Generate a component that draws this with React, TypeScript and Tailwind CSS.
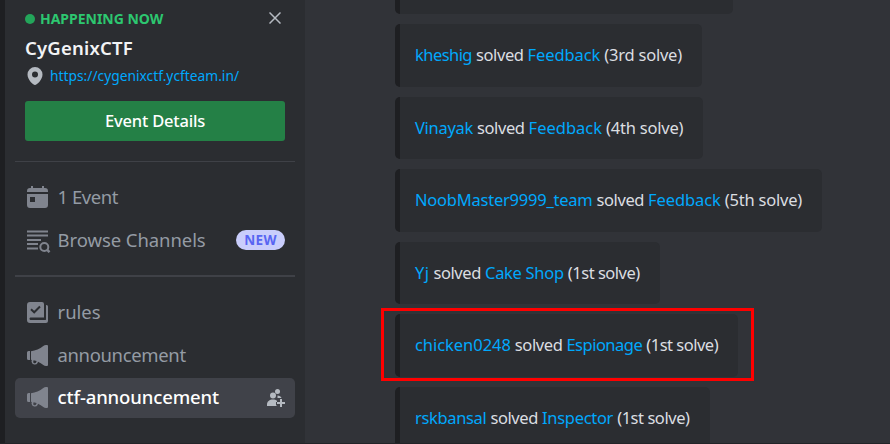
import type { ReactNode } from "react";

type Solve = {
  user: string;
  challenge: string;
  place: string;
  box: string;
  userTrack: string;
  challengeTrack: string;
  placeTrack: string;
};

const solves: Solve[] = [
  { user: "kheshig", challenge: "Feedback", place: "(3rd solve)", box: "w-[307px] h-[63px]", userTrack: "tracking-[-0.55px]", challengeTrack: "tracking-[-0.1px]", placeTrack: "tracking-[-0.22px]" },
  { user: "Vinayak", challenge: "Feedback", place: "(4th solve)", box: "w-[308px] h-[62px]", userTrack: "tracking-[-0.3px]", challengeTrack: "tracking-normal", placeTrack: "tracking-[-0.22px]" },
  { user: "NoobMaster9999_team", challenge: "Feedback", place: "(5th solve)", box: "w-[427px] h-[63px]", userTrack: "tracking-[-0.23px]", challengeTrack: "tracking-[-0.1px]", placeTrack: "tracking-[-0.22px]" },
  { user: "Yj", challenge: "Cake Shop", place: "(1st solve)", box: "w-[265px] h-[62px]", userTrack: "tracking-[0.4px]", challengeTrack: "tracking-[-0.3px]", placeTrack: "tracking-[-0.48px]" },
  { user: "chicken0248", challenge: "Espionage", place: "(1st solve)", box: "w-[343px] h-[63px]", userTrack: "tracking-[-0.05px]", challengeTrack: "tracking-[-0.5px]", placeTrack: "tracking-[-0.5px]" },
  { user: "rskbansal", challenge: "Inspector", place: "(1st solve)", box: "w-[315px] h-[63px]", userTrack: "tracking-[-0.35px]", challengeTrack: "tracking-[-0.3px]", placeTrack: "tracking-[-0.45px]" },
];

function SolveCard({ user, challenge, place, box, userTrack, challengeTrack, placeTrack }: Solve) {
  return (
    <div className={`flex shrink-0 items-center gap-1 rounded-[5px] border-l-[5px] border-[#1e1f22] bg-[#2b2d31] pl-[15px] text-[16.5px] whitespace-nowrap text-[#dbdee1] ${box}`}>
      <span className={`text-[#00a8fc] ${userTrack}`}>{user}</span>
      <span className="tracking-[-0.4px]">solved</span>
      <span className={`text-[#00a8fc] ${challengeTrack}`}>{challenge}</span>
      <span className={placeTrack}>{place}</span>
    </div>
  );
}

function CalendarIcon() {
  return (
    <svg width="21" height="22" viewBox="0 0 21 22" fill="#80848e">
      <path d="M4 0h2v2h9V0h2v2h1a3 3 0 0 1 3 3v1H0V5a3 3 0 0 1 3-3h1z" />
      <path fillRule="evenodd" d="M0 8h21v11a3 3 0 0 1-3 3H3a3 3 0 0 1-3-3zM3 11v5h5v-5z" />
    </svg>
  );
}

function BrowseIcon() {
  return (
    <svg className="relative top-px" width="24" height="23" viewBox="0 0 24 23" fill="none" stroke="#80848e" strokeWidth="2">
      <path d="M0 1.500h21M0 5.500h21M0 10h14M0 14h11M0 18.500h11" />
      <circle cx="17.300" cy="17" r="4" />
      <path d="m20 19.700 2.500 2.500" strokeWidth="2.500" />
    </svg>
  );
}

function RulesIcon() {
  return (
    <svg width="21" height="21" viewBox="0 0 21 21" fill="#80848e">
      <path d="M3 0h12a2 2 0 0 1 2 2v13.500H4c-.8 0-1.500.4-1.500 1.200 0 .9.700 1.300 1.500 1.300h14.500c.3 0 .5-.2.500-.5V3h.500A1.500 1.500 0 0 1 21 4.500V19a2 2 0 0 1-2 2H3a3 3 0 0 1-3-3V3a3 3 0 0 1 3-3" />
      <path d="m4 7.300 3.200 3L13 4.500" fill="none" stroke="#2b2d31" strokeWidth="2" />
    </svg>
  );
}

function MegaphoneIcon() {
  return (
    <svg width="21" height="21" viewBox="0 0 21 21" fill="#80848e">
      <path d="M3 6v9H1.500A1.500 1.500 0 0 1 0 13.500v-6A1.500 1.500 0 0 1 1.500 6z" />
      <path fillRule="evenodd" d="M4 6.200c4.500-.5 8.800-2.300 12.300-5.200.8-.7 1.700-1 2.700-1h1a1 1 0 0 1 1 1v19a1 1 0 0 1-1 1h-1c-1 0-1.900-.3-2.700-1a20 20 0 0 0-5.300-3.200l-.4 1.100A3.300 3.300 0 0 1 4.500 16.500l.3-1.600L4 14.800zM6.600 15.200l-.3 1.300c-.2.900.3 1.600 1.100 1.800.8.200 1.500-.2 1.800-1l.4-1.200z" />
    </svg>
  );
}

function InviteIcon() {
  return (
    <svg width="18" height="19" viewBox="0 0 18 19" fill="#b5bac1">
      <circle cx="10.500" cy="2.500" r="2.500" />
      <circle cx="6" cy="6.500" r="3" />
      <path d="M10.500 6.500c2 0 3.500 1 4 2.500h-4z" />
      <path d="M0 17v-1.500C0 12.500 2.500 10.500 6 10.500c1.500 0 3 .4 4 1.200V13H9v3.500h1V17z" />
      <path d="M13 10h2v3h3v2h-3v3h-2v-3h-3v-2h3z" />
    </svg>
  );
}

function NavRow({ icon, label, children }: { icon: ReactNode; label: ReactNode; children?: ReactNode }) {
  return (
    <div className="flex h-10 items-center rounded px-3">
      <span className="flex w-[30.500px] shrink-0">{icon}</span>
      {label}
      {children}
    </div>
  );
}

export default function App() {
  return (
    <div className="flex h-[444px] w-[890px] overflow-hidden border-b border-[#232428] bg-[#313338] font-['Noto_Sans',sans-serif]">
      <div className="w-[5px] shrink-0 bg-[#1e1f22]" />
      <aside className="w-[300px] shrink-0 bg-[#2b2d31] px-[10px] pt-2 text-[18.500px] whitespace-nowrap text-[#949ba4]">
        <section className="h-[153px] px-[10px]">
          <div className="flex h-[22px] items-center">
            <span className="mr-[5px] size-[10px] rounded-full bg-[#23a55a]" />
            <span className="pb-px text-[14px] leading-5 font-bold tracking-[-0.02px] text-[#2dc770]">HAPPENING NOW</span>
            <svg className="mr-1 mb-[2px] ml-auto" width="12" height="12" viewBox="0 0 12 12" stroke="#b5bac1" strokeWidth="1.500">
              <path d="m.5.5 11 11m0-11-11 11" />
            </svg>
          </div>
          <h1 className="flex h-[36px] items-center text-[18.500px] font-semibold tracking-[0.2px] text-[#f2f3f5]">CyGenixCTF</h1>
          <div className="flex h-5 items-center text-[13.800px] text-[#00a8fc]">
            <svg className="mr-[7px] ml-[2px]" width="16" height="18" viewBox="0 0 16 18" fill="#b5bac1">
              <path fillRule="evenodd" d="M8 0a7.500 7.500 0 0 1 7.500 7.500C15.500 12.500 10 18 8 18S.5 12.500.5 7.500A7.500 7.500 0 0 1 8 0m0 4.500a3 3 0 1 0 0 6 3 3 0 0 0 0-6" />
            </svg>
            <span>https://cygenixctf.ycfteam.in/</span>
          </div>
          <button className="mt-[15px] flex h-10 w-[260px] items-center justify-center rounded-[3px] bg-[#248046] text-[16.500px] font-medium tracking-[-0.2px] text-white">Event Details</button>
        </section>
        <div className="h-px bg-[#3f4147]" />
        <div className="mt-[15px]">
          <NavRow icon={<CalendarIcon />} label={<span className="tracking-[-0.45px]">1 Event</span>} />
          <div className="mt-[3px]">
            <NavRow icon={<BrowseIcon />} label={<span className="tracking-[-0.07px]">Browse Channels</span>}>
              <span className="mr-[-2px] ml-auto flex h-5 w-[49px] items-center justify-center rounded-full bg-[#c9cdfb] text-[13.500px] font-bold tracking-[0.3px] text-[#5865f2]">NEW</span>
            </NavRow>
          </div>
        </div>
        <div className="mt-[15px] h-[2px] bg-[#3f4147]" />
        <nav className="mt-[15px]">
          <NavRow icon={<RulesIcon />} label={<span>rules</span>} />
          <div className="mt-[3px]">
            <NavRow icon={<MegaphoneIcon />} label={<span className="tracking-[-0.35px]">announcement</span>} />
          </div>
          <div className="mt-[3px] rounded-[5px] bg-[#404249]">
            <NavRow icon={<span className="relative -top-px"><MegaphoneIcon /></span>} label={<span className="pb-[2px] font-medium tracking-[-0.13px] text-white">ctf-announcement</span>}>
              <span className="mr-[-2px] ml-auto"><InviteIcon /></span>
            </NavRow>
          </div>
        </nav>
      </aside>
      <main className="relative flex min-w-0 flex-1 flex-col items-start gap-[10px] overflow-hidden pl-[90px]">
        <div className="h-[14px] w-[338px] shrink-0 rounded-b-[5px] border-l-[5px] border-[#1e1f22] bg-[#2b2d31]" />
        {solves.map((solve) => (
          <SolveCard key={solve.user} {...solve} />
        ))}
        <div className="absolute top-[308px] left-[76px] h-[73px] w-[373px] border-[3px] border-[#ff0000]" />
      </main>
    </div>
  );
}
